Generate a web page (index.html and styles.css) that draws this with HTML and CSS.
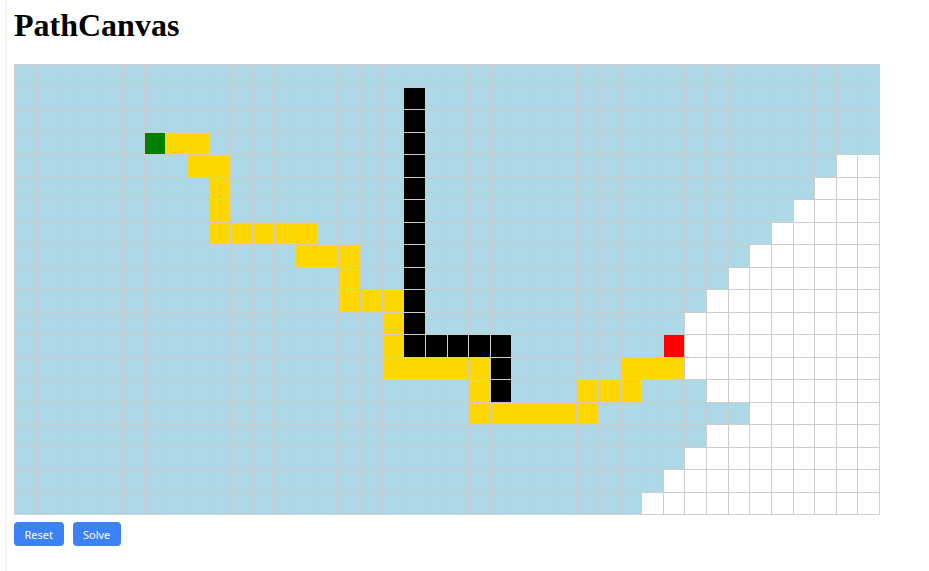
FILE: index.html
```html
<!DOCTYPE html>
<html>
  <head>
    <title>PathCanvas</title>
    <link rel="stylesheet" href="styles.css">
  </head>
  <body>
    <h1>PathCanvas</h1>
    <div class="board" id="board"></div>
    <div class="controls">
      <button type="button" id="resetBtn">Reset</button>
      <button type="button" id="solveBtn">Solve</button>
    </div>
    <script>
      const COLS = 40;
      const ROWS = 20;

      // first unexplored column for every row (40 = row fully explored)
      const frontier = [40, 40, 40, 40, 38, 37, 36, 35, 34, 33, 32, 31, 31, 31, 32, 34, 32, 31, 30, 29];

      const walls = [];
      for (let r = 1; r <= 12; r++) walls.push([r, 18]);
      walls.push([12, 19], [12, 20], [12, 21], [12, 22], [13, 22], [14, 22]);

      const path = [
        [3, 7], [3, 8], [4, 8], [4, 9], [5, 9], [6, 9],
        [7, 9], [7, 10], [7, 11], [7, 12], [7, 13],
        [8, 13], [8, 14], [8, 15], [9, 15],
        [10, 15], [10, 16], [10, 17], [11, 17], [12, 17],
        [13, 17], [13, 18], [13, 19], [13, 20], [13, 21],
        [14, 21], [15, 21], [15, 22], [15, 23], [15, 24], [15, 25], [15, 26],
        [14, 26], [14, 27], [14, 28], [13, 28], [13, 29], [13, 30],
      ];

      const start = [3, 6];
      const end = [12, 30];

      const key = (r, c) => r + ":" + c;
      const wallSet = new Set(walls.map((p) => key(p[0], p[1])));
      const pathSet = new Set(path.map((p) => key(p[0], p[1])));

      const board = document.getElementById("board");

      for (let r = 0; r < ROWS; r++) {
        for (let c = 0; c < COLS; c++) {
          const cell = document.createElement("div");
          cell.className = "cell";
          const k = key(r, c);
          if (r === start[0] && c === start[1]) cell.classList.add("start");
          else if (r === end[0] && c === end[1]) cell.classList.add("end");
          else if (wallSet.has(k)) cell.classList.add("wall");
          else if (pathSet.has(k)) cell.classList.add("path");
          else if (c < frontier[r]) cell.classList.add("visited");
          board.appendChild(cell);
        }
      }
    </script>
  </body>
</html>
```

FILE: styles.css
```css
body {
  font-family: "Liberation Serif", serif;
  margin: 0 0 0 5px;
  padding: 7px 0 0 7px;
  border-left: 2px solid #f2f2f2;
  min-height: 564px;
  background-color: #ffffff;
}
h1 {
  font-size: 32px;
  font-weight: bold;
  margin: 0 0 20px;
  line-height: 37px;
}
.board {
  width: 866px;
  height: 451px;
  box-sizing: border-box;
  display: grid;
  grid-template-columns: repeat(40, 1fr);
  grid-template-rows: repeat(20, 1fr);
  gap: 1px;
  border: 1px solid #d0d0d0;
  background-color: #cccccc;
}
.cell {
  background-color: #ffffff;
}
.cell.visited {
  background-color: #add8e6;
}
.cell.path {
  background-color: #ffd700;
}
.cell.wall {
  background-color: #000000;
}
.cell.start {
  background-color: #008000;
}
.cell.end {
  background-color: #ff0000;
}
.controls {
  display: flex;
  gap: 9px;
  margin-top: 7px;
}
.controls button {
  font-family: "Noto Sans", sans-serif;
  font-size: 11px;
  color: #ffffff;
  background-color: #3b82f6;
  border: none;
  border-radius: 4px;
  height: 24px;
  padding: 0 10.5px;
  cursor: pointer;
}
.controls button:hover {
  background-color: #2563eb;
}
```
